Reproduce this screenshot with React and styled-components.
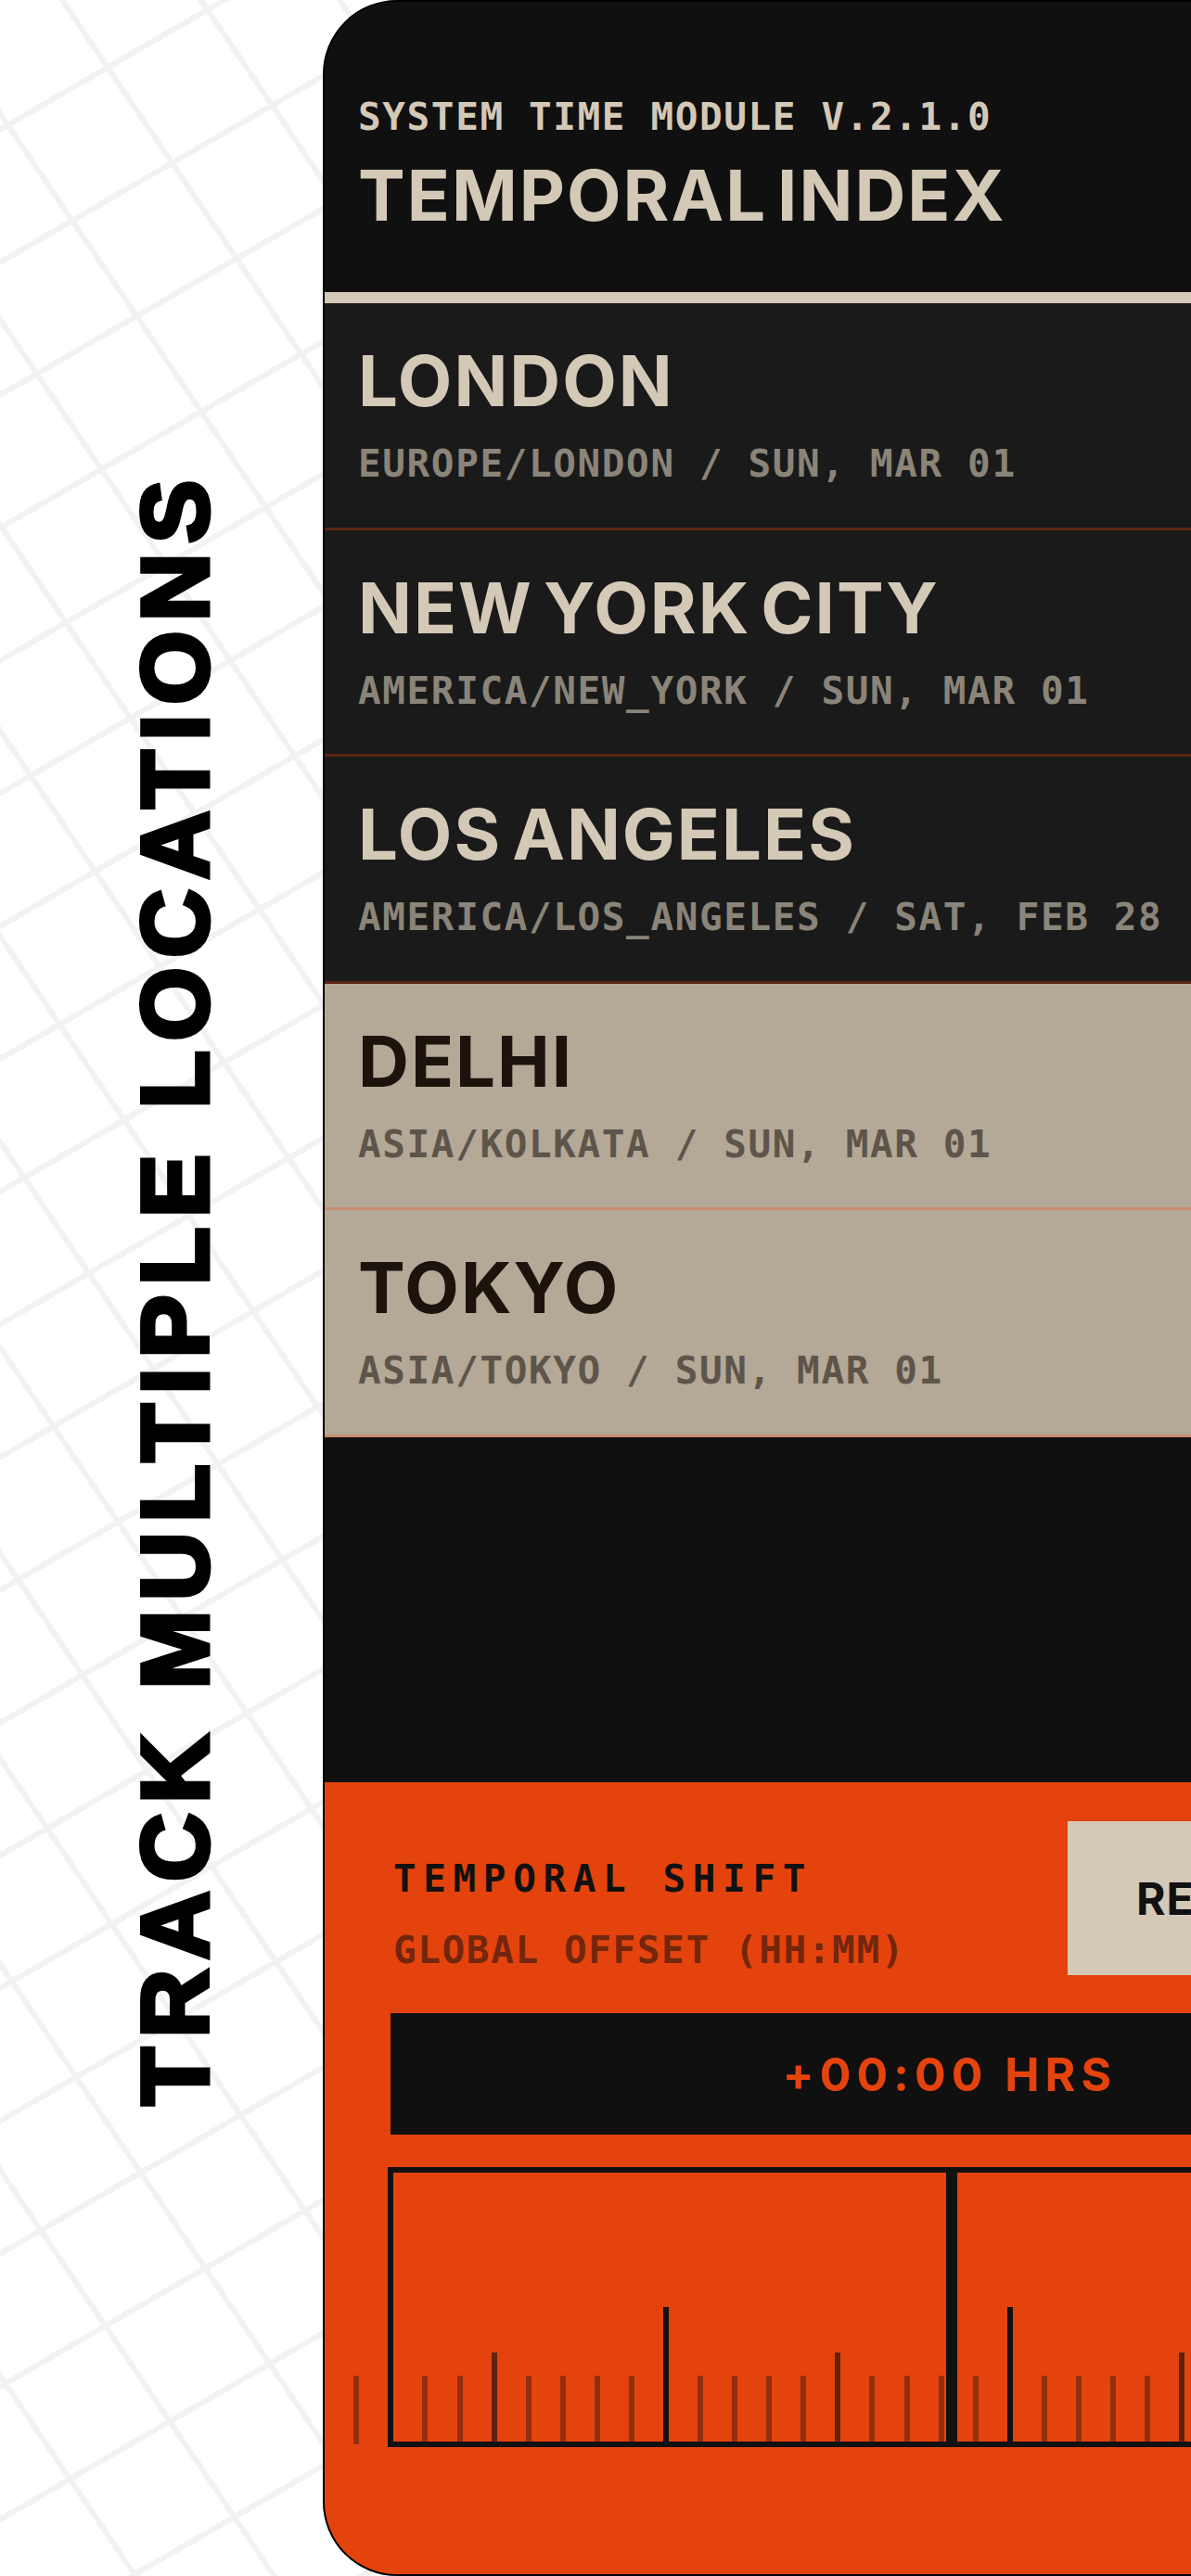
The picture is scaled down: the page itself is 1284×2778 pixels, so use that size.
import React from "react";
import styled, { createGlobalStyle } from "styled-components";

const MONO = `"DejaVu Sans Mono", "Liberation Mono", monospace`;
const SANS = `Inter, "Liberation Sans", sans-serif`;

const GlobalStyle = createGlobalStyle`
  html, body {
    margin: 0;
    padding: 0;
    background: #ffffff;
  }
  body {
    width: 1284px;
    height: 2778px;
    overflow: hidden;
  }
`;

const Page = styled.div`
  width: 1284px;
  height: 2778px;
  overflow: hidden;
  display: flex;
  background-color: #ffffff;
  background-image:
    repeating-linear-gradient(56deg, transparent 0 118px, #f2f2f2 118px 124px),
    repeating-linear-gradient(150deg, transparent 0 118px, #f2f2f2 118px 124px);
`;

const Side = styled.aside`
  width: 348px;
  flex-shrink: 0;
  display: flex;
  align-items: center;
  justify-content: center;
  padding-left: 30px;
  box-sizing: border-box;
`;

const Caption = styled.h1`
  margin: 0;
  writing-mode: vertical-rl;
  transform: rotate(180deg);
  font-family: "Liberation Sans", Arial, sans-serif;
  font-weight: 700;
  font-size: 102px;
  line-height: 1;
  letter-spacing: 10.6px;
  color: #000;
  -webkit-text-stroke: 5px #000;
  white-space: nowrap;
`;

const Screen = styled.main`
  width: 1352px;
  height: 2778px;
  flex-shrink: 0;
  box-sizing: border-box;
  border: 2px solid #000;
  border-radius: 80px;
  overflow: hidden;
  background: #0f0f0f;
  display: flex;
  flex-direction: column;
`;

const Header = styled.header`
  height: 325px;
  box-sizing: border-box;
  padding: 100px 36px 0;
  background: #101010;
  border-bottom: 12px solid #d4c8b7;
`;

const Label = styled.div`
  font-family: ${MONO};
  font-weight: 700;
  font-size: 41px;
  line-height: 48px;
  letter-spacing: ${(p) => p.$spacing || "1.6px"};
  color: ${(p) => p.$color || "#d4c8b7"};
  white-space: nowrap;
`;

const Title = styled.h2`
  margin: ${(p) => p.$gap || "0"} 0 0;
  font-family: ${SANS};
  font-weight: 700;
  font-size: 76px;
  line-height: 80px;
  letter-spacing: 2px;
  word-spacing: -9px;
  color: ${(p) => p.$color || "#d4c8b7"};
  white-space: nowrap;
`;

const Row = styled.section`
  height: 244.6px;
  box-sizing: border-box;
  padding: 43px 36px 0;
  background: ${(p) => (p.$active ? "#b4a897" : "#1a1a1a")};
  border-bottom: 3px solid ${(p) => (p.$active ? "#c98c6f" : "#5b2513")};
`;

const Spacer = styled.div`
  flex: 1;
  background: #0f0f0f;
`;

const Panel = styled.section`
  height: 854px;
  flex-shrink: 0;
  box-sizing: border-box;
  padding: 42px 71px 0;
  background: #e5430d;
  display: flex;
  flex-direction: column;
`;

const PanelTop = styled.div`
  display: flex;
  justify-content: space-between;
  align-items: flex-start;
`;

const PanelText = styled.div`
  margin-top: 38px;
  padding-left: 3px;
  display: flex;
  flex-direction: column;
  gap: 29px;
`;

const ResetButton = styled.button`
  height: 166px;
  width: 476px;
  border: 0;
  padding: 0 74px;
  text-align: left;
  background: #d4c8b7;
  color: #111;
  font-family: ${SANS};
  font-weight: 700;
  font-size: 48px;
  letter-spacing: 1px;
`;

const OffsetDisplay = styled.div`
  margin-top: 41px;
  height: 131px;
  background: #101010;
  display: flex;
  align-items: center;
  justify-content: center;
  font-family: ${SANS};
  font-weight: 700;
  font-size: 50px;
  letter-spacing: 6px;
  color: #e5430d;
`;

const Ruler = styled.div`
  position: relative;
  margin: 35px -71px 0;
  height: 302px;
`;

const TickStrip = styled.div`
  height: 100%;
  box-sizing: border-box;
  padding-bottom: 3px;
  margin-left: -21.3px;
  display: flex;
  align-items: flex-end;
`;

const TickSlot = styled.div`
  width: 37.08px;
  flex-shrink: 0;
  display: flex;
  justify-content: center;
`;

const Tick = styled.div`
  width: 6px;
  height: ${(p) => (p.$kind === "major" ? 148 : p.$kind === "mid" ? 99 : 74)}px;
  background: ${(p) =>
    p.$kind === "major" ? "#111" : p.$kind === "mid" ? "#62210d" : "#932f0e"};
`;

const Frame = styled.div`
  position: absolute;
  top: 0;
  bottom: 0;
  left: 68px;
  right: 68px;
  border: 6px solid #111;
`;

const CenterLine = styled.div`
  position: absolute;
  top: 0;
  bottom: 0;
  left: 50%;
  width: 12px;
  margin-left: -4px;
  background: #111;
`;

const cities = [
  { name: "LONDON", zone: "EUROPE/LONDON / SUN, MAR 01" },
  { name: "NEW YORK CITY", zone: "AMERICA/NEW_YORK / SUN, MAR 01" },
  { name: "LOS ANGELES", zone: "AMERICA/LOS_ANGELES / SAT, FEB 28" },
  { name: "DELHI", zone: "ASIA/KOLKATA / SUN, MAR 01", active: true },
  { name: "TOKYO", zone: "ASIA/TOKYO / SUN, MAR 01", active: true },
];

const ticks = Array.from({ length: 40 }, (_, i) =>
  i % 10 === 0 ? "major" : i % 5 === 0 ? "mid" : "minor"
);

const App = () => {
  return (
    <Page>
      <GlobalStyle />
      <Side>
        <Caption>TRACK MULTIPLE LOCATIONS</Caption>
      </Side>
      <Screen>
        <Header>
          <Label>SYSTEM TIME MODULE V.2.1.0</Label>
          <Title $gap="20px">TEMPORAL INDEX</Title>
        </Header>
        {cities.map((c) => (
          <Row key={c.name} $active={c.active}>
            <Title $color={c.active ? "#1d130d" : "#d4c8b7"}>{c.name}</Title>
            <Label
              style={{ marginTop: 26 }}
              $color={c.active ? "#5e554a" : "#8a8479"}
            >
              {c.zone}
            </Label>
          </Row>
        ))}
        <Spacer />
        <Panel>
          <PanelTop>
            <PanelText>
              <Label $color="#111" $spacing="7.6px">TEMPORAL SHIFT</Label>
              <Label $color="#72260c">GLOBAL OFFSET (HH:MM)</Label>
            </PanelText>
            <ResetButton>RESET</ResetButton>
          </PanelTop>
          <OffsetDisplay>+00:00 HRS</OffsetDisplay>
          <Ruler>
            <TickStrip>
              {ticks.map((kind, i) => (
                <TickSlot key={i}>
                  <Tick $kind={kind} />
                </TickSlot>
              ))}
            </TickStrip>
            <Frame>
              <CenterLine />
            </Frame>
          </Ruler>
        </Panel>
      </Screen>
    </Page>
  );
};

export default App;
